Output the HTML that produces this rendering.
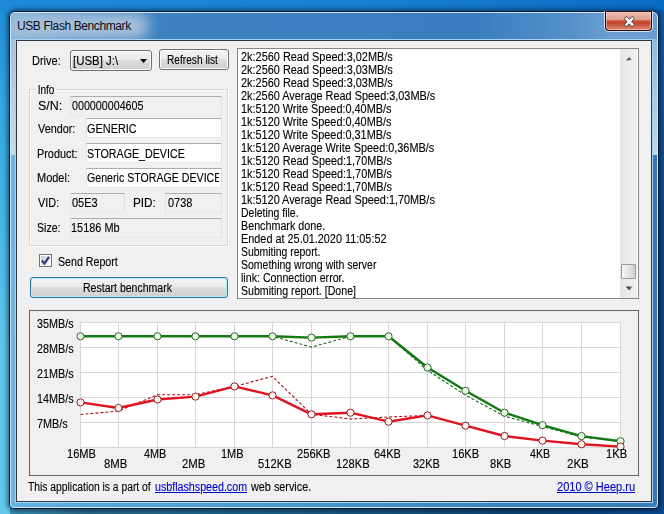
<!DOCTYPE html>
<html><head><meta charset="utf-8"><style>
*{box-sizing:border-box;margin:0;padding:0}
html,body{width:664px;height:514px;overflow:hidden}
body{position:relative;font-family:"Liberation Sans",sans-serif;font-size:12px;color:#000;background:#1e8ad8}
.t{position:absolute;white-space:pre;line-height:13px;height:13px;transform-origin:0 0;-webkit-text-stroke:0.12px currentColor}
.strip{position:absolute}
#win{position:absolute;left:9px;top:11px;width:650px;height:498px;border:1px solid #0a1a2c;border-radius:6px 6px 5px 5px;overflow:hidden;
background:linear-gradient(90deg,#74b4de 0%,#5ea4d6 12%,#4890c8 30%,#3c82c2 55%,#3478b8 100%);
box-shadow:0 0 4px 2px rgba(0,15,40,.5)}
#win2{position:absolute;left:0;top:0;right:0;bottom:0;border:1px solid #c8e6fc;border-radius:5px 5px 4px 4px}
#glow{position:absolute;left:-4px;top:1px;width:142px;height:26px;border-radius:10px;background:#a9c1d9;filter:blur(7px)}
#title{position:absolute;left:17px;top:20px;font-size:12px;letter-spacing:-0.4px;color:#0a0a14;line-height:13px;-webkit-text-stroke:0}
#close{position:absolute;left:605px;top:11px;width:47px;height:20px;border:1px solid #2a0a0a;border-top-color:#3a1010;border-radius:0 0 4px 4px;
background:linear-gradient(180deg,#ecbcb2 0%,#e0a090 42%,#c84e38 50%,#c4442e 62%,#d06a56 82%,#dc8c7a 100%);box-shadow:0 1px 0 0 rgba(230,240,255,.8),1px 0 0 0 rgba(230,240,255,.8),-1px 0 0 0 rgba(230,240,255,.8),inset 0 0 0 1px rgba(255,225,215,.45)}
#client{position:absolute;left:16px;top:40px;width:636px;height:462px;border:1px solid #2a3846;background:#f0f0f0;box-shadow:0 0 0 1px #a8d4f4}
.btn{position:absolute;border:1px solid #707070;border-radius:3px;background:linear-gradient(180deg,#f2f2f2 0%,#ebebeb 50%,#dddddd 50%,#cfcfcf 100%);box-shadow:inset 0 0 0 1px #fcfcfc}
.edit{position:absolute;border:1px solid #abadb3;border-left-color:#e2e3ea;border-right-color:#dbdfe6;border-bottom-color:#e3e9ef;background:#fff}
.ro{background:#f0f0f0}
</style></head><body>
<div class="strip" style="left:0;top:0;width:664px;height:12px;background:linear-gradient(90deg,#1e8ad8,#1a80d0 50%,#0a6cc4)"></div>
<div class="strip" style="left:0;top:0;width:10px;height:514px;background:linear-gradient(180deg,#1e8ad8 0%,#30a6e0 19%,#48b8e4 45%,#62c4ec 67%,#62c8ec 100%)"></div>
<div class="strip" style="left:658px;top:10px;width:6px;height:504px;background:linear-gradient(180deg,#0c5cb0,#0e4a8c 40%,#0e4a8c 80%,#0a4a90)"></div>
<div class="strip" style="left:10px;top:508px;width:654px;height:6px;background:linear-gradient(90deg,#3a90b0 0%,#2a6888 12%,#1e6488 30%,#145278 60%,#0a4070 80%,#0a4a90 100%)"></div>
<div id="win"><div style="position:absolute;left:0;top:0;width:648px;height:28px;background:linear-gradient(90deg,rgba(60,128,192,0) 0,rgba(60,128,192,.6) 100px,#3c80c0 160px,#3a7ec0 470px,#5690c8 560px,#6a9ed0 600px,#6a9ed0 648px)"></div><div id="glow"></div><div style="position:absolute;left:1px;top:27px;width:4px;height:116px;background:linear-gradient(180deg,#a4c4dc,#c8dce8)"></div><div style="position:absolute;left:643px;top:27px;width:4px;height:116px;background:linear-gradient(180deg,#90b8dc,#c0d8e8)"></div><div style="position:absolute;left:0;top:490px;width:648px;height:6px;background:linear-gradient(90deg,#64b4de 0%,#58a8d8 13%,#50a0d0 30%,#4898c8 45%,#3a82bc 77%,#3a7eba 100%)"></div><div id="win2"></div></div>
<div id="title" class="t">USB Flash Benchmark</div>
<div id="close"><svg width="47" height="20" style="position:absolute;left:-1px;top:-1px"><path d="M21.4 7.7 L27.2 13.5 M27.2 7.7 L21.4 13.5" stroke="#4a3438" stroke-width="3.8" stroke-linecap="square"/><path d="M21.4 7.7 L27.2 13.5 M27.2 7.7 L21.4 13.5" stroke="#fff" stroke-width="2.5" stroke-linecap="square"/></svg></div>
<div id="client"></div>

<div class="btn" style="left:70px;top:50px;width:82px;height:21px"></div>
<svg style="position:absolute;left:140px;top:59px" width="8" height="5"><path d="M0 0 H7 L3.5 4 Z" fill="#000"/></svg>
<div class="btn" style="left:159px;top:49px;width:70px;height:21px"></div>

<div style="position:absolute;left:30px;top:90px;width:199px;height:157px;border:1px solid #fff"></div>
<div style="position:absolute;left:29px;top:89px;width:199px;height:157px;border:1px solid #d5d5d5;border-right-color:#d5d5d5"></div>
<div style="position:absolute;left:227px;top:90px;width:1px;height:155px;background:#d5d5d5"></div><div style="position:absolute;left:30px;top:245px;width:198px;height:1px;background:#d5d5d5"></div><div style="position:absolute;left:30px;top:90px;width:197px;height:1px;background:#fff"></div><div style="position:absolute;left:30px;top:90px;width:1px;height:155px;background:#fff"></div>
<div class="edit ro" style="left:70px;top:96px;width:152px;height:20px"></div>
<div class="edit" style="left:86px;top:118px;width:136px;height:20px"></div>
<div class="edit" style="left:86px;top:143px;width:136px;height:20px"></div>
<div class="edit" style="left:86px;top:168px;width:136px;height:20px"><div style="position:absolute;left:0;top:0;width:132px;height:18px;overflow:hidden"><div class="t" style="left:0.21px;top:3px;transform:scaleX(0.8850)">Generic STORAGE DEVICE</div></div></div>
<div class="edit ro" style="left:70px;top:193px;width:55px;height:20px"></div>
<div class="edit ro" style="left:165px;top:193px;width:57px;height:20px"></div>
<div class="edit ro" style="left:70px;top:218px;width:152px;height:20px"></div>

<div style="position:absolute;left:39px;top:254px;width:13px;height:13px;border:1px solid #747474;background:#fff"><div style="position:absolute;left:1px;top:1px;width:9px;height:9px;background:linear-gradient(135deg,#c8d0dc,#eef0f6 70%,#f8f8fa)"></div></div>
<svg style="position:absolute;left:39px;top:254px" width="13" height="13"><path d="M2.8 6.4 L5.4 9.6 L10 2.8" stroke="#343c76" stroke-width="2.2" fill="none"/></svg>
<div class="btn" style="left:30px;top:277px;width:198px;height:21px;border-color:#2f74a6;box-shadow:inset 0 0 0 1px #b4ecfa"></div>

<div style="position:absolute;left:237px;top:48px;width:402px;height:251px;border:1px solid #828790;background:#fff"></div>
<div style="position:absolute;left:620px;top:49px;width:17px;height:249px;background:linear-gradient(90deg,#e6e6e6,#f0f0f0)"></div>
<svg style="position:absolute;left:624px;top:55px" width="10" height="8"><defs><linearGradient id="ag" x1="0" x2="1" y1="0" y2="0"><stop offset="0" stop-color="#111"/><stop offset="1" stop-color="#9a9a9a"/></linearGradient></defs><path d="M2 5.6 L5.5 2 L8 5 Z" fill="url(#ag)"/></svg>
<svg style="position:absolute;left:624px;top:285px" width="10" height="8"><path d="M1.8 1.6 L8.8 1.6 L5.3 5.6 Z" fill="url(#ag)"/></svg>
<div style="position:absolute;left:621px;top:264px;width:15px;height:15px;border:1px solid #9a9a9a;border-radius:1px;background:linear-gradient(90deg,#f6f6f6,#e4e4e4 50%,#cfcfcf)"></div>
<div class="t" style="left:240.59px;top:51px;transform:scaleX(0.9100)">2k:2560 Read Speed:3,02MB/s</div>
<div class="t" style="left:240.59px;top:64px;transform:scaleX(0.9100)">2k:2560 Read Speed:3,03MB/s</div>
<div class="t" style="left:240.59px;top:77px;transform:scaleX(0.9100)">2k:2560 Read Speed:3,03MB/s</div>
<div class="t" style="left:240.59px;top:90px;transform:scaleX(0.9080)">2k:2560 Average Read Speed:3,03MB/s</div>
<div class="t" style="left:240.59px;top:103px;transform:scaleX(0.9070)">1k:5120 Write Speed:0,40MB/s</div>
<div class="t" style="left:240.59px;top:116px;transform:scaleX(0.9070)">1k:5120 Write Speed:0,40MB/s</div>
<div class="t" style="left:240.59px;top:129px;transform:scaleX(0.9070)">1k:5120 Write Speed:0,31MB/s</div>
<div class="t" style="left:240.59px;top:142px;transform:scaleX(0.9070)">1k:5120 Average Write Speed:0,36MB/s</div>
<div class="t" style="left:240.59px;top:155px;transform:scaleX(0.9050)">1k:5120 Read Speed:1,70MB/s</div>
<div class="t" style="left:240.59px;top:168px;transform:scaleX(0.9050)">1k:5120 Read Speed:1,70MB/s</div>
<div class="t" style="left:240.59px;top:181px;transform:scaleX(0.9050)">1k:5120 Read Speed:1,70MB/s</div>
<div class="t" style="left:240.59px;top:194px;transform:scaleX(0.9060)">1k:5120 Average Read Speed:1,70MB/s</div>
<div class="t" style="left:240.63px;top:207px;transform:scaleX(0.8720)">Deleting file.</div>
<div class="t" style="left:240.60px;top:220px;transform:scaleX(0.8950)">Benchmark done.</div>
<div class="t" style="left:240.59px;top:233px;transform:scaleX(0.9060)">Ended at 25.01.2020 11:05:52</div>
<div class="t" style="left:240.63px;top:246px;transform:scaleX(0.8690)">Submiting report.</div>
<div class="t" style="left:240.62px;top:259px;transform:scaleX(0.8750)">Something wrong with server</div>
<div class="t" style="left:240.61px;top:272px;transform:scaleX(0.8870)">link: Connection error.</div>
<div class="t" style="left:240.62px;top:285px;transform:scaleX(0.8840)">Submiting report. [Done]</div>

<div style="position:absolute;left:29px;top:310px;width:610px;height:166px;border:1px solid #646464;background:#f0f0f0"></div>
<svg style="position:absolute;left:0;top:0" width="664" height="514"><rect x="80" y="322" width="541" height="126" fill="#fff"/>
<line x1="80" y1="322.5" x2="622" y2="322.5" stroke="#d8d8d8" stroke-width="1"/>
<line x1="80" y1="347.5" x2="622" y2="347.5" stroke="#d8d8d8" stroke-width="1"/>
<line x1="80" y1="372.5" x2="622" y2="372.5" stroke="#d8d8d8" stroke-width="1"/>
<line x1="80" y1="397.5" x2="622" y2="397.5" stroke="#d8d8d8" stroke-width="1"/>
<line x1="80" y1="422.5" x2="622" y2="422.5" stroke="#d8d8d8" stroke-width="1"/>
<line x1="80" y1="447.5" x2="622" y2="447.5" stroke="#d8d8d8" stroke-width="1"/>
<line x1="80.5" y1="322" x2="80.5" y2="448" stroke="#d8d8d8" stroke-width="1"/>
<line x1="118.5" y1="322" x2="118.5" y2="448" stroke="#d8d8d8" stroke-width="1"/>
<line x1="157.5" y1="322" x2="157.5" y2="448" stroke="#d8d8d8" stroke-width="1"/>
<line x1="195.5" y1="322" x2="195.5" y2="448" stroke="#d8d8d8" stroke-width="1"/>
<line x1="234.5" y1="322" x2="234.5" y2="448" stroke="#d8d8d8" stroke-width="1"/>
<line x1="272.5" y1="322" x2="272.5" y2="448" stroke="#d8d8d8" stroke-width="1"/>
<line x1="311.5" y1="322" x2="311.5" y2="448" stroke="#d8d8d8" stroke-width="1"/>
<line x1="350.5" y1="322" x2="350.5" y2="448" stroke="#d8d8d8" stroke-width="1"/>
<line x1="388.5" y1="322" x2="388.5" y2="448" stroke="#d8d8d8" stroke-width="1"/>
<line x1="427.5" y1="322" x2="427.5" y2="448" stroke="#d8d8d8" stroke-width="1"/>
<line x1="465.5" y1="322" x2="465.5" y2="448" stroke="#d8d8d8" stroke-width="1"/>
<line x1="504.5" y1="322" x2="504.5" y2="448" stroke="#d8d8d8" stroke-width="1"/>
<line x1="542.5" y1="322" x2="542.5" y2="448" stroke="#d8d8d8" stroke-width="1"/>
<line x1="581.5" y1="322" x2="581.5" y2="448" stroke="#d8d8d8" stroke-width="1"/>
<line x1="620.5" y1="322" x2="620.5" y2="448" stroke="#d8d8d8" stroke-width="1"/>
<polyline points="80.5,336.3 118.5,336.3 157.5,336.3 195.5,336.3 234.5,336.3 272.5,336.3 311.5,347.1 350.5,336.3 388.5,336.3 427.5,370.3 465.5,395.2 504.5,416.2 542.5,426.5 581.5,437.0 620.5,441.2" fill="none" stroke="#1a6a1a" stroke-width="1.1" stroke-dasharray="3,2"/>
<polyline points="80.5,414.5 118.5,411.0 157.5,394.7 195.5,394.7 234.5,386.4 272.5,376.4 311.5,414.3 350.5,419.0 388.5,417.0 427.5,415.4 465.5,425.7 504.5,436.0 542.5,440.6 581.5,444.3 620.5,446.6" fill="none" stroke="#b01020" stroke-width="1.1" stroke-dasharray="3,2"/>
<polyline points="80.5,336.3 118.5,336.3 157.5,336.3 195.5,336.3 234.5,336.3 272.5,336.3 311.5,337.6 350.5,336.3 388.5,336.3 427.5,367.5 465.5,390.8 504.5,412.7 542.5,425.2 581.5,436.1 620.5,441.2" fill="none" stroke="#127a12" stroke-width="2.4" stroke-linejoin="round"/>
<polyline points="80.5,402.4 118.5,408.0 157.5,399.5 195.5,396.6 234.5,386.4 272.5,395.4 311.5,414.3 350.5,412.7 388.5,421.7 427.5,415.4 465.5,425.7 504.5,436.0 542.5,440.6 581.5,444.3 620.5,446.6" fill="none" stroke="#e0141e" stroke-width="2.4" stroke-linejoin="round"/>
<circle cx="80.5" cy="336.3" r="3.6" fill="#e6fbe0" stroke="#356535" stroke-width="1"/>
<circle cx="118.5" cy="336.3" r="3.6" fill="#e6fbe0" stroke="#356535" stroke-width="1"/>
<circle cx="157.5" cy="336.3" r="3.6" fill="#e6fbe0" stroke="#356535" stroke-width="1"/>
<circle cx="195.5" cy="336.3" r="3.6" fill="#e6fbe0" stroke="#356535" stroke-width="1"/>
<circle cx="234.5" cy="336.3" r="3.6" fill="#e6fbe0" stroke="#356535" stroke-width="1"/>
<circle cx="272.5" cy="336.3" r="3.6" fill="#e6fbe0" stroke="#356535" stroke-width="1"/>
<circle cx="311.5" cy="337.6" r="3.6" fill="#e6fbe0" stroke="#356535" stroke-width="1"/>
<circle cx="350.5" cy="336.3" r="3.6" fill="#e6fbe0" stroke="#356535" stroke-width="1"/>
<circle cx="388.5" cy="336.3" r="3.6" fill="#e6fbe0" stroke="#356535" stroke-width="1"/>
<circle cx="427.5" cy="367.5" r="3.6" fill="#e6fbe0" stroke="#356535" stroke-width="1"/>
<circle cx="465.5" cy="390.8" r="3.6" fill="#e6fbe0" stroke="#356535" stroke-width="1"/>
<circle cx="504.5" cy="412.7" r="3.6" fill="#e6fbe0" stroke="#356535" stroke-width="1"/>
<circle cx="542.5" cy="425.2" r="3.6" fill="#e6fbe0" stroke="#356535" stroke-width="1"/>
<circle cx="581.5" cy="436.1" r="3.6" fill="#e6fbe0" stroke="#356535" stroke-width="1"/>
<circle cx="620.5" cy="441.2" r="3.6" fill="#e6fbe0" stroke="#356535" stroke-width="1"/>
<circle cx="80.5" cy="402.4" r="3.6" fill="#fff4ee" stroke="#902028" stroke-width="1"/>
<circle cx="118.5" cy="408.0" r="3.6" fill="#fff4ee" stroke="#902028" stroke-width="1"/>
<circle cx="157.5" cy="399.5" r="3.6" fill="#fff4ee" stroke="#902028" stroke-width="1"/>
<circle cx="195.5" cy="396.6" r="3.6" fill="#fff4ee" stroke="#902028" stroke-width="1"/>
<circle cx="234.5" cy="386.4" r="3.6" fill="#fff4ee" stroke="#902028" stroke-width="1"/>
<circle cx="272.5" cy="395.4" r="3.6" fill="#fff4ee" stroke="#902028" stroke-width="1"/>
<circle cx="311.5" cy="414.3" r="3.6" fill="#fff4ee" stroke="#902028" stroke-width="1"/>
<circle cx="350.5" cy="412.7" r="3.6" fill="#fff4ee" stroke="#902028" stroke-width="1"/>
<circle cx="388.5" cy="421.7" r="3.6" fill="#fff4ee" stroke="#902028" stroke-width="1"/>
<circle cx="427.5" cy="415.4" r="3.6" fill="#fff4ee" stroke="#902028" stroke-width="1"/>
<circle cx="465.5" cy="425.7" r="3.6" fill="#fff4ee" stroke="#902028" stroke-width="1"/>
<circle cx="504.5" cy="436.0" r="3.6" fill="#fff4ee" stroke="#902028" stroke-width="1"/>
<circle cx="542.5" cy="440.6" r="3.6" fill="#fff4ee" stroke="#902028" stroke-width="1"/>
<circle cx="581.5" cy="444.3" r="3.6" fill="#fff4ee" stroke="#902028" stroke-width="1"/>
<circle cx="620.5" cy="446.6" r="3.6" fill="#fff4ee" stroke="#902028" stroke-width="1"/></svg>
<div class="t" style="left:36.60px;top:318px;transform:scaleX(0.9000)">35MB/s</div><div class="t" style="left:36.60px;top:343px;transform:scaleX(0.9000)">28MB/s</div><div class="t" style="left:36.60px;top:368px;transform:scaleX(0.9000)">21MB/s</div><div class="t" style="left:36.60px;top:393px;transform:scaleX(0.9000)">14MB/s</div><div class="t" style="left:36.60px;top:418px;transform:scaleX(0.9030)">7MB/s</div>
<div class="t" style="left:66.58px;top:448px;transform:scaleX(0.9233)">16MB</div><div class="t" style="left:104.26px;top:458px;transform:scaleX(0.9435)">8MB</div><div class="t" style="left:144.30px;top:448px;transform:scaleX(0.9042)">4MB</div><div class="t" style="left:181.96px;top:458px;transform:scaleX(0.9435)">2MB</div><div class="t" style="left:221.08px;top:448px;transform:scaleX(0.9174)">1MB</div><div class="t" style="left:258.07px;top:458px;transform:scaleX(0.9324)">512KB</div><div class="t" style="left:297.27px;top:448px;transform:scaleX(0.9294)">256KB</div><div class="t" style="left:336.37px;top:458px;transform:scaleX(0.9324)">128KB</div><div class="t" style="left:374.09px;top:448px;transform:scaleX(0.9143)">64KB</div><div class="t" style="left:413.29px;top:458px;transform:scaleX(0.9143)">32KB</div><div class="t" style="left:451.77px;top:448px;transform:scaleX(0.9250)">16KB</div><div class="t" style="left:490.27px;top:458px;transform:scaleX(0.9333)">8KB</div><div class="t" style="left:529.50px;top:448px;transform:scaleX(0.8864)">4KB</div><div class="t" style="left:567.04px;top:458px;transform:scaleX(0.9619)">2KB</div><div class="t" style="left:606.27px;top:448px;transform:scaleX(0.9286)">1KB</div>
<div class="t" style="left:31.68px;top:55px;transform:scaleX(0.9172)">Drive:</div>
<div class="t" style="left:73.45px;top:55px;transform:scaleX(0.9522)">[USB] J:\</div>
<div class="t" style="left:167.05px;top:54px;transform:scaleX(0.8475)">Refresh list</div>
<div class="t" style="left:38.06px;top:84px;transform:scaleX(0.8368);background:#f0f0f0;padding:0 2px;margin-left:-2px">Info</div>
<div class="t" style="left:37.56px;top:100px;transform:scaleX(1.0381)">S/N:</div>
<div class="t" style="left:38.10px;top:123px;transform:scaleX(0.9025)">Vendor:</div>
<div class="t" style="left:37.40px;top:148px;transform:scaleX(0.9047)">Product:</div>
<div class="t" style="left:37.39px;top:172px;transform:scaleX(0.9147)">Model:</div>
<div class="t" style="left:38.30px;top:197px;transform:scaleX(0.9091)">VID:</div>
<div class="t" style="left:133.12px;top:197px;transform:scaleX(0.9810)">PID:</div>
<div class="t" style="left:37.42px;top:222px;transform:scaleX(0.8800)">Size:</div>
<div class="t" style="left:72.30px;top:100px;transform:scaleX(0.8925)">000000004605</div>
<div class="t" style="left:86.79px;top:123px;transform:scaleX(0.9094)">GENERIC</div>
<div class="t" style="left:87.21px;top:148px;transform:scaleX(0.8907)">STORAGE_DEVICE</div>
<div class="t" style="left:71.90px;top:197px;transform:scaleX(0.9148)">05E3</div>
<div class="t" style="left:168.40px;top:197px;transform:scaleX(0.9115)">0738</div>
<div class="t" style="left:70.99px;top:222px;transform:scaleX(0.9096)">15186 Mb</div>
<div class="t" style="left:57.51px;top:256px;transform:scaleX(0.8864)">Send Report</div>
<div class="t" style="left:82.72px;top:282px;transform:scaleX(0.8780)">Restart benchmark</div>
<div class="t" style="left:28.40px;top:481px;transform:scaleX(0.8594)">This application is a part of</div>
<div class="t" style="left:154.81px;top:481px;transform:scaleX(0.8902);color:#0000cc;text-decoration:underline">usbflashspeed.com</div>
<div class="t" style="left:250.80px;top:481px;transform:scaleX(0.9030)">web service.</div>
<div class="t" style="left:557.18px;top:481px;transform:scaleX(0.9193);color:#0000cc;text-decoration:underline">2010 © Heep.ru</div>
</body></html>
